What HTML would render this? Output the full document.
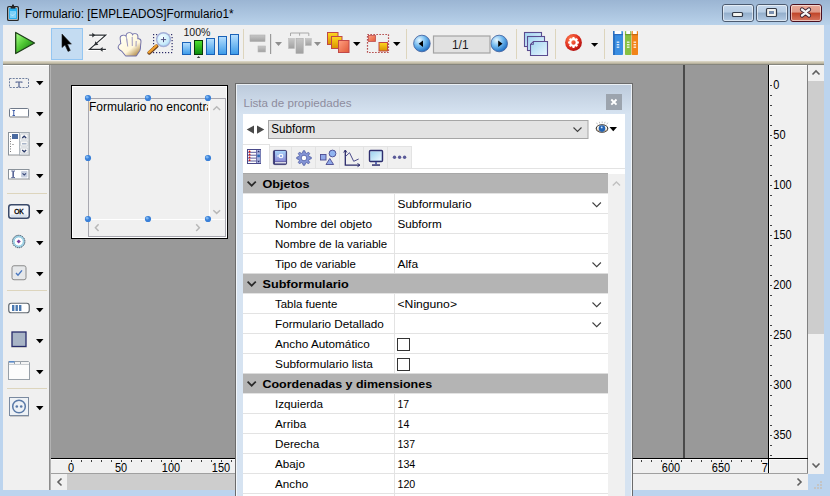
<!DOCTYPE html>
<html><head><meta charset="utf-8"><style>
*{margin:0;padding:0}
html,body{width:830px;height:496px;overflow:hidden;background:#bcd4ee}
svg{display:block;font-family:"Liberation Sans", sans-serif}
</style></head><body>
<svg width="830" height="496" viewBox="0 0 830 496"><defs>
<linearGradient id="gTitle" x1="0" y1="0" x2="0" y2="1"><stop offset="0" stop-color="#9bb5d3"/><stop offset="1" stop-color="#b9d2ea"/></linearGradient>
<linearGradient id="gTan" x1="0" y1="0" x2="0" y2="1"><stop offset="0" stop-color="#e4e0d2"/><stop offset="1" stop-color="#c3bca8"/></linearGradient>
<linearGradient id="gPlay" x1="0" y1="0.1" x2="0.9" y2="1"><stop offset="0" stop-color="#a4ff84"/><stop offset="0.45" stop-color="#50c834"/><stop offset="1" stop-color="#10700e"/></linearGradient>
<linearGradient id="gBar" x1="0" y1="0" x2="0" y2="1"><stop offset="0" stop-color="#b8e0ff"/><stop offset="1" stop-color="#3a9ae8"/></linearGradient>
<linearGradient id="gBarG" x1="0" y1="0" x2="0" y2="1"><stop offset="0" stop-color="#50e030"/><stop offset="1" stop-color="#0a8a0a"/></linearGradient>
<linearGradient id="gYel" x1="0" y1="0" x2="0" y2="1"><stop offset="0" stop-color="#ffd820"/><stop offset="1" stop-color="#d89000"/></linearGradient>
<linearGradient id="gSal" x1="0" y1="0" x2="1" y2="1"><stop offset="0" stop-color="#ffa080"/><stop offset="1" stop-color="#e05838"/></linearGradient>
<linearGradient id="gGrayIc" x1="0" y1="0" x2="0" y2="1"><stop offset="0" stop-color="#c8c8c8"/><stop offset="1" stop-color="#a0a0a0"/></linearGradient>
<radialGradient id="gNav" cx="0.35" cy="0.3" r="0.75"><stop offset="0" stop-color="#e8f8ff"/><stop offset="0.5" stop-color="#70b8ee"/><stop offset="1" stop-color="#1a6ac0"/></radialGradient>
<radialGradient id="gRed" cx="0.35" cy="0.3" r="0.75"><stop offset="0" stop-color="#ff8050"/><stop offset="0.6" stop-color="#e03020"/><stop offset="1" stop-color="#b01010"/></radialGradient>
<linearGradient id="gPage" x1="0" y1="0" x2="1" y2="1"><stop offset="0" stop-color="#a0d4f0"/><stop offset="1" stop-color="#eaf8ff"/></linearGradient>
<radialGradient id="gLens" cx="0.4" cy="0.35" r="0.65"><stop offset="0" stop-color="#f4fcff"/><stop offset="0.7" stop-color="#cdeefc"/><stop offset="1" stop-color="#a8d8f4"/></radialGradient>
<linearGradient id="gHand2" gradientUnits="userSpaceOnUse" x1="122" y1="36" x2="138" y2="56"><stop offset="0" stop-color="#fffff4"/><stop offset="0.6" stop-color="#fff6da"/><stop offset="1" stop-color="#a8803a"/></linearGradient><linearGradient id="gHand" x1="0" y1="0" x2="1" y2="1"><stop offset="0" stop-color="#fffff0"/><stop offset="0.55" stop-color="#fff8e0"/><stop offset="1" stop-color="#a07828"/></linearGradient>
<linearGradient id="gPanel" gradientUnits="userSpaceOnUse" x1="0" y1="84" x2="0" y2="114"><stop offset="0" stop-color="#bccadb"/><stop offset="1" stop-color="#d6e3f1"/></linearGradient>
<linearGradient id="gMinBtn" x1="0" y1="0" x2="0" y2="1"><stop offset="0" stop-color="#c6d8ec"/><stop offset="0.45" stop-color="#b8cde4"/><stop offset="0.5" stop-color="#93aecb"/><stop offset="1" stop-color="#b6cde6"/></linearGradient>
<linearGradient id="gCloseBtn" x1="0" y1="0" x2="0" y2="1"><stop offset="0" stop-color="#eaa898"/><stop offset="0.45" stop-color="#df9a88"/><stop offset="0.5" stop-color="#c04428"/><stop offset="1" stop-color="#d87a64"/></linearGradient>
</defs><rect x="0" y="0" width="830" height="496" fill="#bcd4ee" /><rect x="0" y="0" width="830" height="25" fill="url(#gTitle)" /><rect x="7.65" y="6.65" width="10.7" height="13.7" rx="1.2" fill="#d8e6f2" stroke="#262626" stroke-width="1.3"/><rect x="9" y="8" width="8" height="11" fill="#2ab0f0"/><rect x="10" y="11" width="6" height="7" fill="#7dd0f8"/><path d="M11 14.5l1.5 1.5l3-3" fill="none" stroke="#eaf6ff" stroke-width="0.9" stroke-dasharray="0.9 0.5"/><rect x="10.6" y="6.2" width="4.8" height="2.4" fill="#262626"/><rect x="12" y="4.6" width="2" height="2" fill="#262626"/><text x="25" y="17.6" font-size="12.3" font-weight="normal" fill="#000" text-anchor="start" textLength="208.5" lengthAdjust="spacingAndGlyphs" >Formulario: [EMPLEADOS]Formulario1*</text><rect x="722.5" y="4.5" width="31" height="17" rx="2.5" fill="url(#gMinBtn)" stroke="#4c5b70" stroke-width="1"/><rect x="723.5" y="5.5" width="29" height="15" rx="1.5" fill="none" stroke="#ffffff" stroke-opacity="0.55" stroke-width="1"/><rect x="756.5" y="4.5" width="31" height="17" rx="2.5" fill="url(#gMinBtn)" stroke="#4c5b70" stroke-width="1"/><rect x="757.5" y="5.5" width="29" height="15" rx="1.5" fill="none" stroke="#ffffff" stroke-opacity="0.55" stroke-width="1"/><rect x="790.5" y="4.5" width="31" height="17" rx="2.5" fill="url(#gCloseBtn)" stroke="#4a1020" stroke-width="1"/><rect x="791.5" y="5.5" width="29" height="15" rx="1.5" fill="none" stroke="#ffffff" stroke-opacity="0.55" stroke-width="1"/><rect x="732.5" y="12.5" width="10" height="4" rx="1" fill="#f4f4f0" stroke="#333a48" stroke-width="1.2"/><rect x="766.5" y="8.5" width="10" height="8" rx="1" fill="#f4f4f0" stroke="#333a48" stroke-width="1.2"/><rect x="769" y="11" width="5" height="3" fill="#7a90b0"/><path d="M802 9.5l3.5 2.6l3.5-2.6M802 15.5l3.5-2.6l3.5 2.6" fill="none" stroke="#3a2030" stroke-width="4.2" stroke-linecap="round" stroke-linejoin="round"/><path d="M802 9.5l3.5 2.6l3.5-2.6M802 15.5l3.5-2.6l3.5 2.6" fill="none" stroke="#f6f6f6" stroke-width="2.4" stroke-linecap="round" stroke-linejoin="round"/><rect x="3" y="25" width="821" height="36" fill="#f0f0f0" /><rect x="3" y="61" width="821" height="1" fill="#d8d3c2" /><rect x="3" y="62" width="821" height="1" fill="#cac4b0" /><rect x="3" y="63" width="821" height="1" fill="#b8b29e" /><rect x="3" y="64" width="821" height="1" fill="#86867e" /><path d="M15.7 32.5L34.5 43L15.7 53.5z" fill="url(#gPlay)" stroke="#1d3d18" stroke-width="1.3" stroke-linejoin="round"/><rect x="51.5" y="28.5" width="31" height="31" fill="#c4dcf2" stroke="#94c6f2" stroke-width="1"/><path d="M62 34v13.5l3-2.6l3 6.5l2.3-1l-2.9-6.3h4z" fill="#000" stroke="#202020" stroke-width="0.6" stroke-linejoin="round"/><g fill="none" stroke="#ffffff" stroke-width="3" stroke-opacity="0.85"><path d="M89.2 35.2h16.5L89.5 49.4h16.4"/></g><g fill="none" stroke="#2c3034" stroke-width="1.2"><path d="M89.2 35.2h16.5L89.5 49.4h16.4"/></g><path d="M92.3 32.8v4.8l3 -2.4z M102.6 47v4.8l-3-2.4z M94.3 45.4l1.1-4.1l3 3.4z" fill="#2c3034"/><g fill="#7070aa" stroke="#7070aa" stroke-width="1.9" stroke-linejoin="round"><rect x="121.2" y="35.6" width="5.6" height="14" rx="2.8" transform="rotate(-8 124 42.6)"/><rect x="126.6" y="33.1" width="5.6" height="14" rx="2.8"/><rect x="131.8" y="34.1" width="5.4" height="13" rx="2.7" transform="rotate(4 134.5 40.6)"/><rect x="135.6" y="39.1" width="4.6" height="11" rx="2.3" transform="rotate(6 137.9 44.6)"/><ellipse cx="121.9" cy="47.3" rx="3.2" ry="2.9" transform="rotate(40 121.9 47.3)"/><path d="M123.5 45h16.6l-0.6 5.2l-3.4 5.3h-10.3l-4.6-5.8z"/></g><g fill="url(#gHand2)" stroke="none"><rect x="121.2" y="35.6" width="5.6" height="14" rx="2.8" transform="rotate(-8 124 42.6)"/><rect x="126.6" y="33.1" width="5.6" height="14" rx="2.8"/><rect x="131.8" y="34.1" width="5.4" height="13" rx="2.7" transform="rotate(4 134.5 40.6)"/><rect x="135.6" y="39.1" width="4.6" height="11" rx="2.3" transform="rotate(6 137.9 44.6)"/><ellipse cx="121.9" cy="47.3" rx="3.2" ry="2.9" transform="rotate(40 121.9 47.3)"/><path d="M123.5 45h16.6l-0.6 5.2l-3.4 5.3h-10.3l-4.6-5.8z"/></g><path d="M126.8 38.5l0.9 8M132.2 37l0.1 9M136.2 41l-0.2 5.5" stroke="#8482b8" stroke-width="0.8" fill="none"/><rect x="153" y="34" width="1.2" height="1.2" fill="#2a2a66" /><rect x="153" y="52" width="1.2" height="1.2" fill="#2a2a66" /><rect x="156" y="34" width="1.2" height="1.2" fill="#2a2a66" /><rect x="156" y="52" width="1.2" height="1.2" fill="#2a2a66" /><rect x="159" y="34" width="1.2" height="1.2" fill="#2a2a66" /><rect x="159" y="52" width="1.2" height="1.2" fill="#2a2a66" /><rect x="162" y="34" width="1.2" height="1.2" fill="#2a2a66" /><rect x="162" y="52" width="1.2" height="1.2" fill="#2a2a66" /><rect x="165" y="34" width="1.2" height="1.2" fill="#2a2a66" /><rect x="165" y="52" width="1.2" height="1.2" fill="#2a2a66" /><rect x="168" y="34" width="1.2" height="1.2" fill="#2a2a66" /><rect x="168" y="52" width="1.2" height="1.2" fill="#2a2a66" /><rect x="171" y="34" width="1.2" height="1.2" fill="#2a2a66" /><rect x="171" y="52" width="1.2" height="1.2" fill="#2a2a66" /><rect x="171.5" y="37" width="1.2" height="1.2" fill="#2a2a66" /><rect x="153" y="37" width="1.2" height="1.2" fill="#2a2a66" /><rect x="171.5" y="40" width="1.2" height="1.2" fill="#2a2a66" /><rect x="153" y="40" width="1.2" height="1.2" fill="#2a2a66" /><rect x="171.5" y="43" width="1.2" height="1.2" fill="#2a2a66" /><rect x="153" y="43" width="1.2" height="1.2" fill="#2a2a66" /><rect x="171.5" y="46" width="1.2" height="1.2" fill="#2a2a66" /><rect x="153" y="46" width="1.2" height="1.2" fill="#2a2a66" /><rect x="171.5" y="49" width="1.2" height="1.2" fill="#2a2a66" /><rect x="153" y="49" width="1.2" height="1.2" fill="#2a2a66" /><path d="M149.2 52.8l7.4-6.6" stroke="#6a4020" stroke-width="3.8" stroke-linecap="round"/><path d="M149 52.3l7.4-6.6" stroke="#f0a030" stroke-width="2.4" stroke-linecap="round"/><circle cx="163.5" cy="39.6" r="6.9" fill="url(#gLens)" stroke="#a4b0d8" stroke-width="1.4"/><path d="M163.5 37v5.2M160.9 39.6h5.2" stroke="#505080" stroke-width="1"/><text x="183.5" y="35.8" font-size="11" font-weight="normal" fill="#1a1a1a" text-anchor="start" textLength="27" lengthAdjust="spacingAndGlyphs" >100%</text><rect x="182.5" y="42.5" width="8" height="12.0" fill="url(#gBar)" stroke="#1a62b8" stroke-width="1"/><rect x="194.5" y="40.5" width="8" height="14.0" fill="url(#gBarG)" stroke="#083808" stroke-width="1"/><rect x="206.5" y="38.5" width="8" height="16.0" fill="url(#gBar)" stroke="#1a62b8" stroke-width="1"/><rect x="218.5" y="36.5" width="8" height="18.0" fill="url(#gBar)" stroke="#1a62b8" stroke-width="1"/><rect x="230.5" y="34.5" width="8" height="20.0" fill="url(#gBar)" stroke="#1a62b8" stroke-width="1"/><path d="M196.8 57.8h3.6l-1.8-1.6z" fill="#000"/><rect x="243" y="29" width="1" height="30" fill="#ddd5bd"/><rect x="406" y="29" width="1" height="30" fill="#ddd5bd"/><rect x="516" y="29" width="1" height="30" fill="#ddd5bd"/><rect x="555" y="29" width="1" height="30" fill="#ddd5bd"/><rect x="604" y="29" width="1" height="30" fill="#ddd5bd"/><rect x="250" y="35" width="15" height="6.5" fill="url(#gGrayIc)" stroke="#b0b0b0" stroke-width="0.6"/><rect x="258" y="46" width="7.5" height="6" fill="url(#gGrayIc)" stroke="#b8b8b8" stroke-width="0.6"/><rect x="270" y="34" width="1.2" height="20" fill="#9a9a9a"/><path d="M275 42h7l-3.5 4z" fill="#8e8e8e"/><path d="M290.5 36v-3h18.3v3M299.6 33v2.7" fill="none" stroke="#a8a8a8" stroke-width="1"/><rect x="288.5" y="38.5" width="6" height="10" fill="url(#gGrayIc)" stroke="#bcbcbc" stroke-width="0.6"/><rect x="296" y="38.5" width="7.2" height="14.8" fill="url(#gGrayIc)" stroke="#a8a8a8" stroke-width="0.6"/><rect x="305.3" y="38.5" width="6" height="7" fill="url(#gGrayIc)" stroke="#bcbcbc" stroke-width="0.6"/><path d="M314 42h7l-3.5 4z" fill="#8e8e8e"/><rect x="327.5" y="32.5" width="10.5" height="12" fill="url(#gYel)" stroke="#c04848" stroke-width="1"/><rect x="331.5" y="36.5" width="10.5" height="12" fill="url(#gYel)" stroke="#c04848" stroke-width="1"/><rect x="338.5" y="40.5" width="10.5" height="12" fill="url(#gSal)" stroke="#c04848" stroke-width="1"/><path d="M353 42h7.5l-3.75 4z" fill="#000"/><rect x="367.5" y="34.5" width="21" height="18" fill="none" stroke="#a01818" stroke-width="1.2" stroke-dasharray="1.2 1.8"/><rect x="368.5" y="35.5" width="7" height="6" fill="url(#gSal)" stroke="#c05050" stroke-width="0.8"/><rect x="379" y="42.5" width="8.5" height="8.5" fill="url(#gYel)" stroke="#c04848" stroke-width="1"/><path d="M393 42h7.5l-3.75 4z" fill="#000"/><circle cx="421.9" cy="43.5" r="8.3" fill="url(#gNav)" stroke="#3a5a9a" stroke-width="0.8"/><path d="M418.7 43.7L423 40.5v6.5z" fill="#000"/><circle cx="499.2" cy="43.5" r="8.3" fill="url(#gNav)" stroke="#3a5a9a" stroke-width="0.8"/><path d="M502.5 43.7L498.2 40.5v6.5z" fill="#000"/><rect x="433.5" y="36" width="56.5" height="17" fill="#e1e1e1" stroke="#a4a4a4" stroke-width="1.2"/><text x="452" y="49" font-size="12.3" font-weight="normal" fill="#1a1a1a" text-anchor="start" textLength="16.5" lengthAdjust="spacingAndGlyphs" >1/1</text><rect x="524.5" y="32.5" width="17" height="14" fill="url(#gPage)" stroke="#5a4c90" stroke-width="1.1"/><rect x="527.5" y="36.5" width="17" height="14" fill="url(#gPage)" stroke="#5a4c90" stroke-width="1.1"/><path d="M530.5 44.5l3-3h14v14h-17z" fill="url(#gPage)" stroke="#5a4c90" stroke-width="1.1"/><path d="M530.5 44.5h3v-3" fill="none" stroke="#5a4c90" stroke-width="0.8"/><circle cx="573.5" cy="42.5" r="8.4" fill="url(#gRed)"/><path d="M577.10 42.50L578.90 42.50M576.05 45.05L577.32 46.32M573.50 46.10L573.50 47.90M570.95 45.05L569.68 46.32M569.90 42.50L568.10 42.50M570.95 39.95L569.68 38.68M573.50 38.90L573.50 37.10M576.05 39.95L577.32 38.68" stroke="#fff" stroke-width="2" /><circle cx="573.5" cy="42.5" r="3.3" fill="none" stroke="#fff" stroke-width="2.2"/><path d="M591 43h7.2l-3.6 3.8z" fill="#000"/><rect x="613" y="31" width="10" height="24" rx="1" fill="#3a8ee2"/><rect x="613" y="31" width="2" height="24" fill="#2a72c4"/><rect x="614.6" y="31" width="6.8" height="3" fill="#ffffff"/><rect x="613" y="34" width="10" height="1.2" fill="#2a6cc0"/><rect x="625" y="31" width="6.3" height="24" rx="0.8" fill="#86c040"/><rect x="626.2" y="31" width="4" height="3" fill="#ffffff"/><rect x="625" y="34" width="6.3" height="1.2" fill="#6a9a30"/><rect x="631.6" y="31" width="6.4" height="24" rx="0.8" fill="#f28418"/><rect x="632.8" y="31" width="4" height="3" fill="#ffffff"/><rect x="631.6" y="34" width="6.4" height="1.2" fill="#c86a10"/><rect x="616.7" y="41.5" width="2.6" height="1.4" fill="#ffffff" fill-opacity="0.8"/><rect x="616.7" y="44" width="2.6" height="1.4" fill="#ffffff" fill-opacity="0.8"/><rect x="616.7" y="46.5" width="2.6" height="1.4" fill="#ffffff" fill-opacity="0.8"/><rect x="626.9000000000001" y="41.5" width="2.6" height="1.4" fill="#ffffff" fill-opacity="0.8"/><rect x="626.9000000000001" y="44" width="2.6" height="1.4" fill="#ffffff" fill-opacity="0.8"/><rect x="626.9000000000001" y="46.5" width="2.6" height="1.4" fill="#ffffff" fill-opacity="0.8"/><rect x="633.5" y="41.5" width="2.6" height="1.4" fill="#ffffff" fill-opacity="0.8"/><rect x="633.5" y="44" width="2.6" height="1.4" fill="#ffffff" fill-opacity="0.8"/><rect x="633.5" y="46.5" width="2.6" height="1.4" fill="#ffffff" fill-opacity="0.8"/><rect x="3" y="65" width="46" height="425" fill="#f0f0f0" /><rect x="3" y="65" width="46" height="1" fill="#ffffff" /><rect x="49" y="65" width="1" height="425" fill="#8c8c8c" /><rect x="50" y="65" width="1" height="425" fill="#b2b2b2" /><rect x="51" y="65" width="717" height="393" fill="#999999" /><rect x="768" y="65" width="1" height="409" fill="#000" /><rect x="769" y="65" width="38" height="409" fill="#f0f0f0" /><rect x="769" y="65" width="38" height="1" fill="#ffffff" /><rect x="769" y="65" width="1" height="409" fill="#ffffff" /><rect x="807" y="65" width="1" height="409" fill="#808080" /><rect x="51" y="458" width="757" height="1" fill="#000" /><rect x="51" y="459" width="717" height="14" fill="#f0f0f0" /><rect x="51" y="459" width="717" height="1" fill="#ffffff" /><rect x="769" y="459" width="38" height="1" fill="#ffffff" /><rect x="51" y="473" width="757" height="1" fill="#a0a0a0" /><rect x="808" y="65" width="16" height="409" fill="#f0f0f0" /><rect x="808" y="81" width="16" height="253" fill="#cdcdcd" /><rect x="51" y="474" width="757" height="16" fill="#f0f0f0" /><rect x="67" y="474" width="400" height="16" fill="#cdcdcd" /><rect x="824" y="25" width="6" height="471" fill="#bcd4ee" /><rect x="0" y="490" width="830" height="6" fill="#bcd4ee" /><rect x="0" y="25" width="3" height="471" fill="#bcd4ee" /><path d="M36 81h7.5l-3.75 4.2z" fill="#000"/><path d="M36 112h7.5l-3.75 4.2z" fill="#000"/><path d="M36 143h7.5l-3.75 4.2z" fill="#000"/><path d="M36 174h7.5l-3.75 4.2z" fill="#000"/><path d="M36 210h7.5l-3.75 4.2z" fill="#000"/><path d="M36 241h7.5l-3.75 4.2z" fill="#000"/><path d="M36 272h7.5l-3.75 4.2z" fill="#000"/><path d="M36 308h7.5l-3.75 4.2z" fill="#000"/><path d="M36 339h7.5l-3.75 4.2z" fill="#000"/><path d="M36 370h7.5l-3.75 4.2z" fill="#000"/><path d="M36 406h7.5l-3.75 4.2z" fill="#000"/><rect x="7" y="193" width="40" height="1" fill="#ddd5bd" /><rect x="7" y="290" width="40" height="1" fill="#ddd5bd" /><rect x="7" y="388" width="40" height="1" fill="#ddd5bd" /><rect x="9.5" y="78.5" width="19" height="9" fill="none" stroke="#7080a0" stroke-width="1" stroke-dasharray="2 1.2"/><path d="M15.6 81.5h6.8v1.6h-0.6l-0.4-0.7h-1.8v4.3h0.9v0.6h-3v-0.6h0.9v-4.3h-1.8l-0.4 0.7h-0.6z" fill="#50608e"/><rect x="9.5" y="108.5" width="19" height="8.5" rx="1" fill="#ffffff" stroke="#707a8a" stroke-width="1"/><rect x="10" y="116.8" width="19" height="1.2" fill="#b8b8b8"/><path d="M12.5 110.5h2.5M13.75 110.5v5M12.5 115.5h2.5" stroke="#3050a0" stroke-width="0.9" fill="none"/><rect x="8.5" y="132.5" width="20.5" height="22.5" fill="#ffffff" stroke="#8a929a" stroke-width="1"/><rect x="9" y="155" width="21" height="1" fill="#c0c0c0"/><rect x="12" y="134" width="6" height="5" fill="#4a6aa0"/><path d="M10.5 136v17" stroke="#404040" stroke-width="0.8" stroke-dasharray="0.9 1.6"/><path d="M12.5 144.5h1" stroke="#404040" stroke-width="0.8"/><rect x="19.5" y="132.5" width="9.5" height="22.5" fill="#eef0f2" stroke="#a0a8b0" stroke-width="0.8"/><rect x="20.5" y="134" width="7.5" height="5" rx="1" fill="#f8f8f8" stroke="#b8c0c8" stroke-width="0.6"/><rect x="20.5" y="141" width="7.5" height="5" rx="1" fill="#f8f8f8" stroke="#b8c0c8" stroke-width="0.6"/><rect x="20.5" y="148" width="7.5" height="5" rx="1" fill="#f8f8f8" stroke="#b8c0c8" stroke-width="0.6"/><path d="M22.2 138l2-1.8l2 1.8M22.2 150l2 1.8l2-1.8" stroke="#2a3a6a" stroke-width="1.3" fill="none"/><rect x="22" y="143" width="4.5" height="1.5" fill="#a8b4c8"/><rect x="8.5" y="169.5" width="20.5" height="9.5" fill="#ffffff" stroke="#8a929a" stroke-width="1"/><rect x="9" y="179" width="21" height="1" fill="#c0c0c0"/><path d="M11.3 171h1.2q0.7 0 0.7 0.8v5q0 0.8-0.7 0.8h-1.2M15 171h-1.2q-0.7 0-0.7 0.8v5q0 0.8 0.7 0.8h1.2" stroke="#283a78" stroke-width="0.8" fill="none"/><rect x="21" y="171" width="6.5" height="6.5" rx="1" fill="#c8d0e0"/><path d="M22.5 173.3l1.75 1.7l1.75-1.7" stroke="#3a4a7a" stroke-width="1.1" fill="none"/><rect x="8.75" y="204.75" width="20.5" height="13.5" rx="2.5" fill="#f4f6fa" stroke="#3a4a6a" stroke-width="1.5"/><rect x="10.5" y="214.5" width="17" height="2.5" rx="1" fill="#d8e2ee"/><text x="19" y="214" font-family="Liberation Sans" font-size="7.2" fill="#000" stroke="#000" stroke-width="0.35" text-anchor="middle" textLength="9.6" lengthAdjust="spacingAndGlyphs">OK</text><circle cx="18.7" cy="241.5" r="6.2" fill="#a8d8e8" stroke="#3a4a60" stroke-width="1" stroke-dasharray="1.3 0.7"/><circle cx="18.7" cy="241.5" r="4.6" fill="#ffffff" stroke="#8cc8e0" stroke-width="1"/><path d="M18.7 239.4l2.1 2.1l-2.1 2.1l-2.1-2.1z" fill="#7a3a9e"/><rect x="12" y="265.75" width="14" height="14" rx="2" fill="#e6e8ea" stroke="#8a8a8a" stroke-width="1"/><path d="M16 273l2 2.2l4-4.8" stroke="#4a78c0" stroke-width="1.4" fill="none"/><rect x="8.75" y="303.25" width="20.5" height="9.5" rx="2.5" fill="#ffffff" stroke="#606870" stroke-width="1.2"/><rect x="12" y="305" width="2.4" height="6" fill="#4a78b0"/><rect x="15.5" y="305" width="2.4" height="6" fill="#4a78b0"/><rect x="19" y="305" width="2.4" height="6" fill="#4a78b0"/><rect x="12" y="332" width="14" height="14.5" fill="#a8b4c6" stroke="#262a6a" stroke-width="1.3"/><rect x="11.5" y="347" width="15" height="1" fill="#c8c8c8"/><rect x="8.5" y="364" width="21" height="15.5" fill="#fcfcfc" stroke="#98a0a8" stroke-width="1"/><path d="M8.5 364v-2.5h6v2.5M14.5 364v-2.5h6v2.5M20.5 364v-2.5h8l1 1v1.5" fill="#f4f4f4" stroke="#98a0a8" stroke-width="1"/><rect x="9" y="361" width="5.5" height="1.6" fill="#5a8ac8"/><rect x="9.5" y="397.5" width="19" height="18" fill="#eef2f6" stroke="#7a8aa0" stroke-width="1"/><rect x="10" y="416" width="19" height="1" fill="#c8c8c8"/><circle cx="19" cy="406.5" r="6.3" fill="none" stroke="#5a7aa8" stroke-width="1.5"/><circle cx="16.8" cy="406.5" r="1.3" fill="#5a7aa8"/><circle cx="21.2" cy="406.5" r="1.3" fill="#5a7aa8"/><rect x="71" y="85" width="157" height="154" fill="#000" /><rect x="72" y="86" width="155" height="152" fill="#ffffff" /><rect x="73" y="87" width="153" height="150" fill="#f0f0f0" /><rect x="88.5" y="98.5" width="137" height="138" fill="#f0f0f0" stroke="#a8a8b0" stroke-width="1"/><rect x="209" y="99" width="1" height="120" fill="#ffffff" /><rect x="89" y="219" width="136" height="1" fill="#ffffff" /><path d="M213.3 110l3.4-3.2l3.4 3.2M213.3 210.2l3.4 3.2l3.4-3.2M98.6 224.3l-3.2 3.4l3.2 3.4M196.2 224.3l3.2 3.4l-3.2 3.4" stroke="#b8b8b8" stroke-width="1.5" fill="none"/><clipPath id="cpForm"><rect x="88" y="99" width="120" height="20"/></clipPath><g clip-path="url(#cpForm)"><text x="89" y="110.6" font-size="12" font-weight="normal" fill="#000" text-anchor="start" >Formulario no encontrado</text></g><circle cx="88" cy="98" r="3.1" fill="#3a80d8"/><circle cx="87.2" cy="97.2" r="1.4" fill="#7ab4f0"/><circle cx="148" cy="98" r="3.1" fill="#3a80d8"/><circle cx="147.2" cy="97.2" r="1.4" fill="#7ab4f0"/><circle cx="208" cy="98" r="3.1" fill="#3a80d8"/><circle cx="207.2" cy="97.2" r="1.4" fill="#7ab4f0"/><circle cx="88" cy="158" r="3.1" fill="#3a80d8"/><circle cx="87.2" cy="157.2" r="1.4" fill="#7ab4f0"/><circle cx="208" cy="158" r="3.1" fill="#3a80d8"/><circle cx="207.2" cy="157.2" r="1.4" fill="#7ab4f0"/><circle cx="88" cy="219" r="3.1" fill="#3a80d8"/><circle cx="87.2" cy="218.2" r="1.4" fill="#7ab4f0"/><circle cx="148" cy="219" r="3.1" fill="#3a80d8"/><circle cx="147.2" cy="218.2" r="1.4" fill="#7ab4f0"/><circle cx="208" cy="219" r="3.1" fill="#3a80d8"/><circle cx="207.2" cy="218.2" r="1.4" fill="#7ab4f0"/><rect x="770" y="85" width="2" height="1" fill="#404040" /><rect x="770" y="95" width="2" height="1" fill="#404040" /><rect x="770" y="105" width="2" height="1" fill="#404040" /><rect x="770" y="115" width="2" height="1" fill="#404040" /><rect x="770" y="125" width="2" height="1" fill="#404040" /><rect x="770" y="135" width="2" height="1" fill="#404040" /><rect x="770" y="145" width="2" height="1" fill="#404040" /><rect x="770" y="155" width="2" height="1" fill="#404040" /><rect x="770" y="165" width="2" height="1" fill="#404040" /><rect x="770" y="175" width="2" height="1" fill="#404040" /><rect x="770" y="185" width="2" height="1" fill="#404040" /><rect x="770" y="195" width="2" height="1" fill="#404040" /><rect x="770" y="205" width="2" height="1" fill="#404040" /><rect x="770" y="215" width="2" height="1" fill="#404040" /><rect x="770" y="225" width="2" height="1" fill="#404040" /><rect x="770" y="235" width="2" height="1" fill="#404040" /><rect x="770" y="245" width="2" height="1" fill="#404040" /><rect x="770" y="255" width="2" height="1" fill="#404040" /><rect x="770" y="265" width="2" height="1" fill="#404040" /><rect x="770" y="275" width="2" height="1" fill="#404040" /><rect x="770" y="285" width="2" height="1" fill="#404040" /><rect x="770" y="295" width="2" height="1" fill="#404040" /><rect x="770" y="305" width="2" height="1" fill="#404040" /><rect x="770" y="315" width="2" height="1" fill="#404040" /><rect x="770" y="325" width="2" height="1" fill="#404040" /><rect x="770" y="335" width="2" height="1" fill="#404040" /><rect x="770" y="345" width="2" height="1" fill="#404040" /><rect x="770" y="355" width="2" height="1" fill="#404040" /><rect x="770" y="365" width="2" height="1" fill="#404040" /><rect x="770" y="375" width="2" height="1" fill="#404040" /><rect x="770" y="385" width="2" height="1" fill="#404040" /><rect x="770" y="395" width="2" height="1" fill="#404040" /><rect x="770" y="405" width="2" height="1" fill="#404040" /><rect x="770" y="415" width="2" height="1" fill="#404040" /><rect x="770" y="425" width="2" height="1" fill="#404040" /><rect x="770" y="435" width="2" height="1" fill="#404040" /><rect x="770" y="445" width="2" height="1" fill="#404040" /><rect x="770" y="455" width="2" height="1" fill="#404040" /><text x="773.3" y="89.0" font-size="12.2" font-weight="normal" fill="#000" text-anchor="start" textLength="6.1" lengthAdjust="spacingAndGlyphs" >0</text><text x="773.3" y="139.0" font-size="12.2" font-weight="normal" fill="#000" text-anchor="start" textLength="12.2" lengthAdjust="spacingAndGlyphs" >50</text><text x="773.3" y="189.0" font-size="12.2" font-weight="normal" fill="#000" text-anchor="start" textLength="18.299999999999997" lengthAdjust="spacingAndGlyphs" >100</text><text x="773.3" y="239.0" font-size="12.2" font-weight="normal" fill="#000" text-anchor="start" textLength="18.299999999999997" lengthAdjust="spacingAndGlyphs" >150</text><text x="773.3" y="289.0" font-size="12.2" font-weight="normal" fill="#000" text-anchor="start" textLength="18.299999999999997" lengthAdjust="spacingAndGlyphs" >200</text><text x="773.3" y="339.0" font-size="12.2" font-weight="normal" fill="#000" text-anchor="start" textLength="18.299999999999997" lengthAdjust="spacingAndGlyphs" >250</text><text x="773.3" y="389.0" font-size="12.2" font-weight="normal" fill="#000" text-anchor="start" textLength="18.299999999999997" lengthAdjust="spacingAndGlyphs" >300</text><text x="773.3" y="439.0" font-size="12.2" font-weight="normal" fill="#000" text-anchor="start" textLength="18.299999999999997" lengthAdjust="spacingAndGlyphs" >350</text><rect x="71" y="460" width="1" height="2" fill="#404040" /><rect x="81" y="460" width="1" height="2" fill="#404040" /><rect x="91" y="460" width="1" height="2" fill="#404040" /><rect x="101" y="460" width="1" height="2" fill="#404040" /><rect x="111" y="460" width="1" height="2" fill="#404040" /><rect x="121" y="460" width="1" height="2" fill="#404040" /><rect x="131" y="460" width="1" height="2" fill="#404040" /><rect x="141" y="460" width="1" height="2" fill="#404040" /><rect x="151" y="460" width="1" height="2" fill="#404040" /><rect x="161" y="460" width="1" height="2" fill="#404040" /><rect x="171" y="460" width="1" height="2" fill="#404040" /><rect x="181" y="460" width="1" height="2" fill="#404040" /><rect x="191" y="460" width="1" height="2" fill="#404040" /><rect x="201" y="460" width="1" height="2" fill="#404040" /><rect x="211" y="460" width="1" height="2" fill="#404040" /><rect x="221" y="460" width="1" height="2" fill="#404040" /><rect x="231" y="460" width="1" height="2" fill="#404040" /><rect x="241" y="460" width="1" height="2" fill="#404040" /><rect x="251" y="460" width="1" height="2" fill="#404040" /><rect x="261" y="460" width="1" height="2" fill="#404040" /><rect x="271" y="460" width="1" height="2" fill="#404040" /><rect x="281" y="460" width="1" height="2" fill="#404040" /><rect x="291" y="460" width="1" height="2" fill="#404040" /><rect x="301" y="460" width="1" height="2" fill="#404040" /><rect x="311" y="460" width="1" height="2" fill="#404040" /><rect x="321" y="460" width="1" height="2" fill="#404040" /><rect x="331" y="460" width="1" height="2" fill="#404040" /><rect x="341" y="460" width="1" height="2" fill="#404040" /><rect x="351" y="460" width="1" height="2" fill="#404040" /><rect x="361" y="460" width="1" height="2" fill="#404040" /><rect x="371" y="460" width="1" height="2" fill="#404040" /><rect x="381" y="460" width="1" height="2" fill="#404040" /><rect x="391" y="460" width="1" height="2" fill="#404040" /><rect x="401" y="460" width="1" height="2" fill="#404040" /><rect x="411" y="460" width="1" height="2" fill="#404040" /><rect x="421" y="460" width="1" height="2" fill="#404040" /><rect x="431" y="460" width="1" height="2" fill="#404040" /><rect x="441" y="460" width="1" height="2" fill="#404040" /><rect x="451" y="460" width="1" height="2" fill="#404040" /><rect x="461" y="460" width="1" height="2" fill="#404040" /><rect x="471" y="460" width="1" height="2" fill="#404040" /><rect x="481" y="460" width="1" height="2" fill="#404040" /><rect x="491" y="460" width="1" height="2" fill="#404040" /><rect x="501" y="460" width="1" height="2" fill="#404040" /><rect x="511" y="460" width="1" height="2" fill="#404040" /><rect x="521" y="460" width="1" height="2" fill="#404040" /><rect x="531" y="460" width="1" height="2" fill="#404040" /><rect x="541" y="460" width="1" height="2" fill="#404040" /><rect x="551" y="460" width="1" height="2" fill="#404040" /><rect x="561" y="460" width="1" height="2" fill="#404040" /><rect x="571" y="460" width="1" height="2" fill="#404040" /><rect x="581" y="460" width="1" height="2" fill="#404040" /><rect x="591" y="460" width="1" height="2" fill="#404040" /><rect x="601" y="460" width="1" height="2" fill="#404040" /><rect x="611" y="460" width="1" height="2" fill="#404040" /><rect x="621" y="460" width="1" height="2" fill="#404040" /><rect x="631" y="460" width="1" height="2" fill="#404040" /><rect x="641" y="460" width="1" height="2" fill="#404040" /><rect x="651" y="460" width="1" height="2" fill="#404040" /><rect x="661" y="460" width="1" height="2" fill="#404040" /><rect x="671" y="460" width="1" height="2" fill="#404040" /><rect x="681" y="460" width="1" height="2" fill="#404040" /><rect x="691" y="460" width="1" height="2" fill="#404040" /><rect x="701" y="460" width="1" height="2" fill="#404040" /><rect x="711" y="460" width="1" height="2" fill="#404040" /><rect x="721" y="460" width="1" height="2" fill="#404040" /><rect x="731" y="460" width="1" height="2" fill="#404040" /><rect x="741" y="460" width="1" height="2" fill="#404040" /><rect x="751" y="460" width="1" height="2" fill="#404040" /><rect x="761" y="460" width="1" height="2" fill="#404040" /><clipPath id="cpHR"><rect x="51" y="459" width="717" height="14"/></clipPath><g clip-path="url(#cpHR)"><text x="71" y="471.8" font-size="12.2" font-weight="normal" fill="#000" text-anchor="middle" textLength="6.1" lengthAdjust="spacingAndGlyphs" >0</text><text x="121" y="471.8" font-size="12.2" font-weight="normal" fill="#000" text-anchor="middle" textLength="12.2" lengthAdjust="spacingAndGlyphs" >50</text><text x="171" y="471.8" font-size="12.2" font-weight="normal" fill="#000" text-anchor="middle" textLength="18.299999999999997" lengthAdjust="spacingAndGlyphs" >100</text><text x="221" y="471.8" font-size="12.2" font-weight="normal" fill="#000" text-anchor="middle" textLength="18.299999999999997" lengthAdjust="spacingAndGlyphs" >150</text><text x="271" y="471.8" font-size="12.2" font-weight="normal" fill="#000" text-anchor="middle" textLength="18.299999999999997" lengthAdjust="spacingAndGlyphs" >200</text><text x="321" y="471.8" font-size="12.2" font-weight="normal" fill="#000" text-anchor="middle" textLength="18.299999999999997" lengthAdjust="spacingAndGlyphs" >250</text><text x="371" y="471.8" font-size="12.2" font-weight="normal" fill="#000" text-anchor="middle" textLength="18.299999999999997" lengthAdjust="spacingAndGlyphs" >300</text><text x="421" y="471.8" font-size="12.2" font-weight="normal" fill="#000" text-anchor="middle" textLength="18.299999999999997" lengthAdjust="spacingAndGlyphs" >350</text><text x="471" y="471.8" font-size="12.2" font-weight="normal" fill="#000" text-anchor="middle" textLength="18.299999999999997" lengthAdjust="spacingAndGlyphs" >400</text><text x="521" y="471.8" font-size="12.2" font-weight="normal" fill="#000" text-anchor="middle" textLength="18.299999999999997" lengthAdjust="spacingAndGlyphs" >450</text><text x="571" y="471.8" font-size="12.2" font-weight="normal" fill="#000" text-anchor="middle" textLength="18.299999999999997" lengthAdjust="spacingAndGlyphs" >500</text><text x="621" y="471.8" font-size="12.2" font-weight="normal" fill="#000" text-anchor="middle" textLength="18.299999999999997" lengthAdjust="spacingAndGlyphs" >550</text><text x="671" y="471.8" font-size="12.2" font-weight="normal" fill="#000" text-anchor="middle" textLength="18.299999999999997" lengthAdjust="spacingAndGlyphs" >600</text><text x="721" y="471.8" font-size="12.2" font-weight="normal" fill="#000" text-anchor="middle" textLength="18.299999999999997" lengthAdjust="spacingAndGlyphs" >650</text><text x="771" y="471.8" font-size="12.2" font-weight="normal" fill="#000" text-anchor="middle" textLength="18.299999999999997" lengthAdjust="spacingAndGlyphs" >700</text></g><path d="M812.5 74.5l3.5-3.5l3.5 3.5" stroke="#606060" stroke-width="1.6" fill="none"/><path d="M812.5 463.5l3.5 3.5l3.5-3.5" stroke="#606060" stroke-width="1.6" fill="none"/><path d="M61.5 478.5l-3.5 3.5l3.5 3.5" stroke="#606060" stroke-width="1.6" fill="none"/><path d="M797.5 478.5l3.5 3.5l-3.5 3.5" stroke="#606060" stroke-width="1.6" fill="none"/><rect x="820" y="481" width="2" height="2" fill="#c4c4c4" /><rect x="817" y="484" width="2" height="2" fill="#c4c4c4" /><rect x="820" y="484" width="2" height="2" fill="#c4c4c4" /><rect x="814" y="487" width="2" height="2" fill="#c4c4c4" /><rect x="817" y="487" width="2" height="2" fill="#c4c4c4" /><rect x="820" y="487" width="2" height="2" fill="#c4c4c4" /><rect x="683" y="65" width="2" height="393" fill="#4a4a4a" /><rect x="235.5" y="83.5" width="397" height="420" fill="url(#gPanel)" stroke="#6b6b6b" stroke-width="1"/><rect x="236.5" y="84.5" width="395" height="420" fill="none" stroke="#ffffff" stroke-opacity="0.7" stroke-width="1"/><rect x="243" y="114" width="382" height="382" fill="#ffffff" /><text x="243.5" y="107" font-size="11.8" font-weight="normal" fill="#8e8c9e" text-anchor="start" textLength="108" lengthAdjust="spacingAndGlyphs" >Lista de propiedades</text><rect x="606" y="94" width="16" height="16" fill="#9ca4ae" /><path d="M611.3 99.5l5.2 5.2M616.5 99.5l-5.2 5.2" stroke="#fff" stroke-width="1.9"/><path d="M254 125.5v8.2l-7.3-4.1z M257 125.5v8.2l7.3-4.1z" fill="#4a4a4a"/><rect x="268.5" y="120.5" width="319.5" height="18" fill="#e3e3e3" stroke="#a6a6a6" stroke-width="1"/><text x="271.3" y="132.7" font-size="12" font-weight="normal" fill="#000" text-anchor="start" textLength="44" lengthAdjust="spacingAndGlyphs" >Subform</text><path d="M573.5 127.5l4 4l4-4" stroke="#404040" stroke-width="1.1" fill="none"/><path d="M597.5 124.3l-1-1.6M599.8 123.4l-0.5-1.6M602.2 123.1v-1.6M604.6 123.4l0.5-1.6M606.8 124.3l1-1.6" stroke="#b0b0b0" stroke-width="0.8"/><ellipse cx="602" cy="128.5" rx="5.8" ry="3.7" fill="#fbf3e8" stroke="#2e2e2e" stroke-width="1.1"/><path d="M596.5 129.5q5.5 4.5 11 0" stroke="#b09070" stroke-width="0.8" fill="none"/><circle cx="602" cy="128.6" r="3.3" fill="#2464b4"/><circle cx="601.7" cy="127.4" r="0.9" fill="#d0e4ff"/><path d="M609.5 127h7.5l-3.75 4.2z" fill="#000"/><rect x="243" y="168" width="382" height="1" fill="#e3e3e3" /><rect x="267.5" y="146.5" width="24" height="22" fill="#f0f0f0" stroke="#e3e3e3" stroke-width="1"/><rect x="291.5" y="146.5" width="24" height="22" fill="#f0f0f0" stroke="#e3e3e3" stroke-width="1"/><rect x="315.5" y="146.5" width="24" height="22" fill="#f0f0f0" stroke="#e3e3e3" stroke-width="1"/><rect x="339.5" y="146.5" width="24" height="22" fill="#f0f0f0" stroke="#e3e3e3" stroke-width="1"/><rect x="363.5" y="146.5" width="24" height="22" fill="#f0f0f0" stroke="#e3e3e3" stroke-width="1"/><rect x="387.5" y="146.5" width="24" height="22" fill="#f0f0f0" stroke="#e3e3e3" stroke-width="1"/><path d="M243 169V144.5h26.5V169" fill="#ffffff" stroke="#e3e3e3" stroke-width="1"/><rect x="243" y="145" width="26" height="24" fill="#ffffff" /><rect x="269" y="144" width="1" height="25" fill="#e3e3e3" /><rect x="247.5" y="149.5" width="13" height="14" fill="#ffffff" stroke="#4a4a8a" stroke-width="1"/><rect x="248" y="151.8" width="8.5" height="1" fill="#5a5a9a"/><rect x="248" y="154.7" width="8.5" height="1" fill="#5a5a9a"/><rect x="248" y="157.6" width="8.5" height="1" fill="#5a5a9a"/><rect x="248" y="160.5" width="8.5" height="1" fill="#5a5a9a"/><circle cx="249.6" cy="151.5" r="0.9" fill="#d01010"/><circle cx="249.6" cy="154.4" r="0.9" fill="#d01010"/><circle cx="249.6" cy="157.3" r="0.9" fill="#d01010"/><circle cx="249.6" cy="160.20000000000002" r="0.9" fill="#d01010"/><rect x="256.5" y="150" width="4" height="13" fill="#a8b4e0"/><rect x="256" y="150" width="0.8" height="13.5" fill="#5a5a9a"/><rect x="257.3" y="154.6" width="2.6" height="2.6" fill="#2a68b8"/><path d="M257.2 152.2l1.4-1.6l1.4 1.6zM257.2 160.8l1.4 1.6l1.4-1.6z" fill="#2a2a6a"/><linearGradient id="gBook" x1="0" y1="0" x2="0" y2="1"><stop offset="0" stop-color="#a8d4fa"/><stop offset="1" stop-color="#8a88d4"/></linearGradient><rect x="273.4" y="150.4" width="13.2" height="14.2" rx="1.3" fill="#3c3c7c" stroke="#2e2e6a" stroke-width="0.8"/><rect x="275" y="151" width="10.8" height="10.6" fill="url(#gBook)"/><rect x="275" y="162.2" width="11" height="1.2" fill="#ffffff"/><circle cx="281" cy="156" r="1.8" fill="none" stroke="#ffffff" stroke-width="1.1"/><path d="M277.2 156h2" stroke="#fff" stroke-width="1"/><polygon points="303.28,150.74 304.72,150.74 305.51,153.02 306.45,153.41 308.63,152.36 309.64,153.37 308.59,155.55 308.98,156.49 311.26,157.28 311.26,158.72 308.98,159.51 308.59,160.45 309.64,162.63 308.63,163.64 306.45,162.59 305.51,162.98 304.72,165.26 303.28,165.26 302.49,162.98 301.55,162.59 299.37,163.64 298.36,162.63 299.41,160.45 299.02,159.51 296.74,158.72 296.74,157.28 299.02,156.49 299.41,155.55 298.36,153.37 299.37,152.36 301.55,153.41 302.49,153.02" fill="#8494d6" stroke="#5664a8" stroke-width="0.9" stroke-linejoin="round"/><circle cx="304" cy="158" r="2.8" fill="#ffffff" stroke="#5664a8" stroke-width="0.9"/><rect x="320.5" y="154.5" width="5.5" height="5.5" fill="#90a8e8" stroke="#4a4a90" stroke-width="0.9"/><circle cx="332.5" cy="153.5" r="3.4" fill="#90b4f0" stroke="#4a4a90" stroke-width="0.9"/><path d="M329.8 158.5l3.8 6h-7.6z" fill="#90a8e8" stroke="#4a4a90" stroke-width="0.9"/><path d="M345.3 150.5v14.6h14" stroke="#2a2a6a" stroke-width="1.3" fill="none"/><path d="M343.7 152.5l1.6-2.5l1.6 2.5M357.5 163.5l2.5 1.6l-2.5 1.6" stroke="#2a2a6a" stroke-width="1" fill="none"/><path d="M345.5 156.5l4-3.8l4.2 8.6l5-2.3" stroke="#4a4a8a" stroke-width="1" fill="none"/><rect x="369.5" y="150.5" width="13" height="11" rx="1" fill="#c8e4f8" stroke="#2e2e6e" stroke-width="1.4"/><rect x="371" y="152" width="10" height="8" fill="url(#gPage)"/><path d="M375 162h2v2.2h-2z" fill="#5a6ab0"/><rect x="372" y="164.3" width="8" height="1.5" fill="#2e2e6e"/><circle cx="394.5" cy="157.2" r="1.7" fill="#5a5a98"/><circle cx="399.6" cy="157.2" r="1.7" fill="#5a5a98"/><circle cx="404.6" cy="157.2" r="1.7" fill="#5a5a98"/><rect x="243" y="173" width="365" height="20" fill="#b4b4b4" /><rect x="243" y="173" width="365" height="1" fill="#a8a8a8" /><path d="M247.6 181.6l4.1 4.1l4.1-4.1" stroke="#2a2a2a" stroke-width="1.7" fill="none"/><text x="262.5" y="188.0" font-size="11.8" font-weight="bold" fill="#000" text-anchor="start" textLength="47.0" lengthAdjust="spacingAndGlyphs" >Objetos</text><rect x="243" y="193" width="365" height="1" fill="#e3e3e3" /><rect x="394" y="193" width="1" height="20" fill="#e3e3e3" /><text x="275" y="208" font-size="11.7" font-weight="normal" fill="#000" text-anchor="start" textLength="21.8" lengthAdjust="spacingAndGlyphs" >Tipo</text><text x="397.5" y="208" font-size="11.7" font-weight="normal" fill="#000" text-anchor="start" textLength="74.0" lengthAdjust="spacingAndGlyphs" >Subformulario</text><path d="M592.5 202.5l4.2 4.2l4.2-4.2" stroke="#404040" stroke-width="1.1" fill="none"/><rect x="243" y="213" width="365" height="1" fill="#e3e3e3" /><rect x="394" y="213" width="1" height="20" fill="#e3e3e3" /><text x="275" y="228" font-size="11.7" font-weight="normal" fill="#000" text-anchor="start" textLength="97.0" lengthAdjust="spacingAndGlyphs" >Nombre del objeto</text><text x="397.5" y="228" font-size="11.7" font-weight="normal" fill="#000" text-anchor="start" textLength="44.2" lengthAdjust="spacingAndGlyphs" >Subform</text><rect x="243" y="233" width="365" height="1" fill="#e3e3e3" /><rect x="394" y="233" width="1" height="20" fill="#e3e3e3" /><text x="275" y="248" font-size="11.7" font-weight="normal" fill="#000" text-anchor="start" textLength="112.2" lengthAdjust="spacingAndGlyphs" >Nombre de la variable</text><rect x="243" y="253" width="365" height="1" fill="#e3e3e3" /><rect x="394" y="253" width="1" height="20" fill="#e3e3e3" /><text x="275" y="268" font-size="11.7" font-weight="normal" fill="#000" text-anchor="start" textLength="80.8" lengthAdjust="spacingAndGlyphs" >Tipo de variable</text><text x="397.5" y="268" font-size="11.7" font-weight="normal" fill="#000" text-anchor="start" textLength="20.5" lengthAdjust="spacingAndGlyphs" >Alfa</text><path d="M592.5 262.5l4.2 4.2l4.2-4.2" stroke="#404040" stroke-width="1.1" fill="none"/><rect x="243" y="273" width="365" height="20" fill="#b4b4b4" /><rect x="243" y="273" width="365" height="1" fill="#dcdcdc" /><path d="M247.6 281.6l4.1 4.1l4.1-4.1" stroke="#2a2a2a" stroke-width="1.7" fill="none"/><text x="262.5" y="288.0" font-size="11.8" font-weight="bold" fill="#000" text-anchor="start" textLength="86.3" lengthAdjust="spacingAndGlyphs" >Subformulario</text><rect x="243" y="293" width="365" height="1" fill="#e3e3e3" /><rect x="394" y="293" width="1" height="20" fill="#e3e3e3" /><text x="275" y="308" font-size="11.7" font-weight="normal" fill="#000" text-anchor="start" textLength="62.4" lengthAdjust="spacingAndGlyphs" >Tabla fuente</text><text x="397.5" y="308" font-size="11.7" font-weight="normal" fill="#000" text-anchor="start" textLength="59.5" lengthAdjust="spacingAndGlyphs" >&lt;Ninguno&gt;</text><path d="M592.5 302.5l4.2 4.2l4.2-4.2" stroke="#404040" stroke-width="1.1" fill="none"/><rect x="243" y="313" width="365" height="1" fill="#e3e3e3" /><rect x="394" y="313" width="1" height="20" fill="#e3e3e3" /><text x="275" y="328" font-size="11.7" font-weight="normal" fill="#000" text-anchor="start" textLength="108.8" lengthAdjust="spacingAndGlyphs" >Formulario Detallado</text><path d="M592.5 322.5l4.2 4.2l4.2-4.2" stroke="#404040" stroke-width="1.1" fill="none"/><rect x="243" y="333" width="365" height="1" fill="#e3e3e3" /><rect x="394" y="333" width="1" height="20" fill="#e3e3e3" /><text x="275" y="348" font-size="11.7" font-weight="normal" fill="#000" text-anchor="start" textLength="94.7" lengthAdjust="spacingAndGlyphs" >Ancho Automático</text><rect x="397.5" y="338.5" width="12" height="12" fill="#fff" stroke="#333" stroke-width="1"/><rect x="243" y="353" width="365" height="1" fill="#e3e3e3" /><rect x="394" y="353" width="1" height="20" fill="#e3e3e3" /><text x="275" y="368" font-size="11.7" font-weight="normal" fill="#000" text-anchor="start" textLength="97.8" lengthAdjust="spacingAndGlyphs" >Subformulario lista</text><rect x="397.5" y="358.5" width="12" height="12" fill="#fff" stroke="#333" stroke-width="1"/><rect x="243" y="373" width="365" height="20" fill="#b4b4b4" /><rect x="243" y="373" width="365" height="1" fill="#dcdcdc" /><path d="M247.6 381.6l4.1 4.1l4.1-4.1" stroke="#2a2a2a" stroke-width="1.7" fill="none"/><text x="262.5" y="388.0" font-size="11.8" font-weight="bold" fill="#000" text-anchor="start" textLength="169.60000000000002" lengthAdjust="spacingAndGlyphs" >Coordenadas y dimensiones</text><rect x="243" y="393" width="365" height="1" fill="#e3e3e3" /><rect x="394" y="393" width="1" height="20" fill="#e3e3e3" /><text x="275" y="408" font-size="11.7" font-weight="normal" fill="#000" text-anchor="start" textLength="48.0" lengthAdjust="spacingAndGlyphs" >Izquierda</text><text x="397.5" y="408" font-size="11.7" font-weight="normal" fill="#000" text-anchor="start" textLength="11.6" lengthAdjust="spacingAndGlyphs" >17</text><rect x="243" y="413" width="365" height="1" fill="#e3e3e3" /><rect x="394" y="413" width="1" height="20" fill="#e3e3e3" /><text x="275" y="428" font-size="11.7" font-weight="normal" fill="#000" text-anchor="start" >Arriba</text><text x="397.5" y="428" font-size="11.7" font-weight="normal" fill="#000" text-anchor="start" textLength="11.8" lengthAdjust="spacingAndGlyphs" >14</text><rect x="243" y="433" width="365" height="1" fill="#e3e3e3" /><rect x="394" y="433" width="1" height="20" fill="#e3e3e3" /><text x="275" y="448" font-size="11.7" font-weight="normal" fill="#000" text-anchor="start" >Derecha</text><text x="397.5" y="448" font-size="11.7" font-weight="normal" fill="#000" text-anchor="start" textLength="17.6" lengthAdjust="spacingAndGlyphs" >137</text><rect x="243" y="453" width="365" height="1" fill="#e3e3e3" /><rect x="394" y="453" width="1" height="20" fill="#e3e3e3" /><text x="275" y="468" font-size="11.7" font-weight="normal" fill="#000" text-anchor="start" >Abajo</text><text x="397.5" y="468" font-size="11.7" font-weight="normal" fill="#000" text-anchor="start" textLength="17.8" lengthAdjust="spacingAndGlyphs" >134</text><rect x="243" y="473" width="365" height="1" fill="#e3e3e3" /><rect x="394" y="473" width="1" height="20" fill="#e3e3e3" /><text x="275" y="488" font-size="11.7" font-weight="normal" fill="#000" text-anchor="start" >Ancho</text><text x="397.5" y="488" font-size="11.7" font-weight="normal" fill="#000" text-anchor="start" textLength="17.8" lengthAdjust="spacingAndGlyphs" >120</text><rect x="243" y="493" width="365" height="1" fill="#e3e3e3" /><rect x="394" y="493" width="1" height="20" fill="#e3e3e3" /><rect x="608" y="169" width="17" height="327" fill="#f0f0f0" /><rect x="608" y="169" width="17" height="5" fill="#ffffff" /><path d="M612.8 185.5l3.6-3.6l3.6 3.6" stroke="#c0c0c0" stroke-width="1.4" fill="none"/></svg>
</body></html>
